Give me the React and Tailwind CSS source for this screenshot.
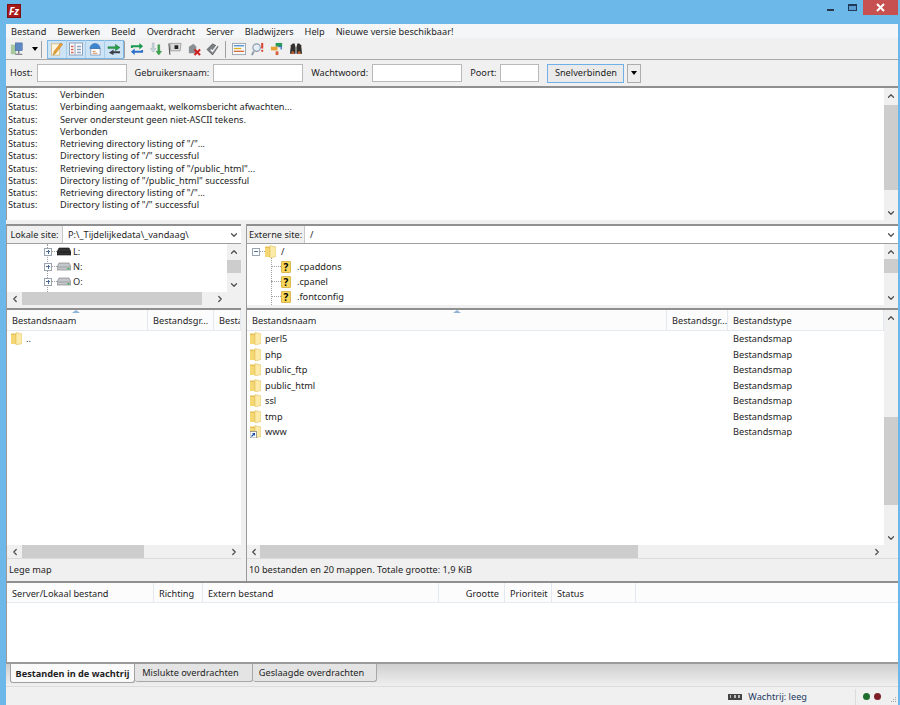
import { ChevronUp, ChevronDown, ChevronLeft, ChevronRight } from 'lucide-react';

const logLines = [
	'Verbinden',
	'Verbinding aangemaakt, welkomsbericht afwachten...',
	'Server ondersteunt geen niet-ASCII tekens.',
	'Verbonden',
	'Retrieving directory listing of "/"...',
	'Directory listing of "/" successful',
	'Retrieving directory listing of "/public_html"...',
	'Directory listing of "/public_html" successful',
	'Retrieving directory listing of "/"...',
	'Directory listing of "/" successful',
];

const remoteFolders = ['perl5', 'php', 'public_ftp', 'public_html', 'ssl', 'tmp', 'www'];

function Folder({ link }) {
	return (
		<svg width="11" height="13" viewBox="0 0 11 13" className="shrink-0">
			<path d="M0 1.500h5v10.500H0z" fill="#e6bf55" />
			<path d="M5 0.500l6 1.500v9.500l-6 1.500z" fill="#fbeaa8" stroke="#dcb850" strokeWidth="0.5" />
			<path d="M0 3h4.500v9H0z" fill="#f5d873" />
			{link && <rect x="0" y="6.500" width="6.500" height="6.500" fill="#fff" stroke="#777" strokeWidth="0.7" />}
			{link && <path d="M1.500 11.500l3-3M2.500 8.500h2v2" stroke="#1c4fa8" strokeWidth="1.100" fill="none" />}
		</svg>
	);
}

function Unknown() {
	return (
		<span className="w-[10px] h-[12px] shrink-0 bg-[#f7d65c] border border-[#dcb850] rounded-[1px] flex items-center justify-center text-[10px] font-bold text-black leading-none">
			?
		</span>
	);
}

function Drive({ dark }) {
	return (
		<svg width="14" height="9" viewBox="0 0 14 9" className="shrink-0">
			<path d="M2 1h10l2 4v3H0V5z" fill={dark ? '#333' : '#c4c8cc'} stroke={dark ? '#111' : '#777'} strokeWidth="0.6" />
			<path d="M0.500 5h13" stroke={dark ? '#111' : '#888'} strokeWidth="0.6" />
			{!dark && <rect x="10.500" y="6" width="2" height="1.400" fill="#35b050" />}
		</svg>
	);
}

function Expander({ minus }) {
	return (
		<span className="relative w-[8px] h-[8px] shrink-0 border border-[#9aa4b0] bg-white flex items-center justify-center">
			<span className="w-[4px] h-px bg-[#4a6a9a]"></span>
			{!minus && <span className="absolute w-px h-[4px] bg-[#4a6a9a]"></span>}
		</span>
	);
}

function VScroll({ before, thumb }) {
	return (
		<div className="w-[14px] shrink-0 bg-[#f0f0f0] flex flex-col text-[#505050]">
			<div className="h-[15px] shrink-0 flex items-center justify-center">
				<ChevronUp size={10} strokeWidth={3} />
			</div>
			<div className="flex-1 min-h-0">
				<div style={{ height: before }}></div>
				<div className="bg-[#cdcdcd]" style={{ height: thumb }}></div>
			</div>
			<div className="h-[15px] shrink-0 flex items-center justify-center">
				<ChevronDown size={10} strokeWidth={3} />
			</div>
		</div>
	);
}

function HScroll({ thumb, after, lead }) {
	return (
		<div className="h-[13px] shrink-0 bg-[#f0f0f0] flex text-[#505050]" style={{ paddingRight: after }}>
			<div className="shrink-0 flex items-center justify-center" style={{ width: lead }}>
				<ChevronLeft size={10} strokeWidth={3} />
			</div>
			<div className="flex-1 min-w-0">
				<div className="h-full bg-[#cdcdcd]" style={{ width: thumb }}></div>
			</div>
			<div className="w-[15px] shrink-0 flex items-center justify-center">
				<ChevronRight size={10} strokeWidth={3} />
			</div>
		</div>
	);
}

function HeaderCell({ width, right, flush, children }) {
	return (
		<div
			className={`shrink-0 h-full pt-[2px] border-r border-[#e4e8ef] pl-[5px] flex items-center overflow-hidden whitespace-nowrap ${flush ? '' : 'pr-[5px]'} ${right ? 'justify-end' : ''}`}
			style={{ width }}
		>
			{children}
		</div>
	);
}

function SortArrow({ left }) {
	return <span className="absolute top-0 w-0 h-0 border-x-[4px] border-x-transparent border-b-[3px] border-b-[#8fb4d8]" style={{ left }}></span>;
}

function Field({ width }) {
	return <div className="h-[18px] bg-white border border-[#b9b9b9]" style={{ width }}></div>;
}

function ToolIcon({ narrow, children }) {
	return <div className={`${narrow ? 'w-[18px]' : 'w-[19px]'} h-[18px] shrink-0 flex items-center justify-center [&>svg]:w-[14px] [&>svg]:h-[14px]`}>{children}</div>;
}

function Sep() {
	return <div className="w-px h-[17px] bg-[#a0a0a0] shrink-0"></div>;
}

function Toolbar() {
	return (
		<div className="h-[20px] pt-[1px] flex items-center shrink-0 border-b border-[#a9a9a9] box-content">
			<div className="w-[1px]"></div>
			{/* site manager */}
			<ToolIcon>
				<svg width="16" height="16" viewBox="0 0 16 16">
					<rect x="1" y="3" width="6" height="11" fill="#a8c8a0" />
					<rect x="6" y="1" width="8" height="9" fill="#5c88c4" stroke="#3a5a90" strokeWidth="0.5" />
					<path d="M10 10v3M6 14h8" stroke="#667" strokeWidth="1.400" />
				</svg>
			</ToolIcon>
			<div className="w-[6px]"></div>
			<span className="w-0 h-0 border-x-[3.5px] border-x-transparent border-t-[4px] border-t-black"></span>
			<div className="w-[3px]"></div>
			<Sep />
			<div className="w-[5px]"></div>
			<div className="flex bg-[#cde4f7] border border-[#7db5e3] h-[19px] items-center">
				<div className="border-r border-[#a8cdea]">
					<ToolIcon narrow>
						<svg width="14" height="15" viewBox="0 0 14 15">
							<rect x="1" y="2" width="9" height="12" fill="#fdf7df" stroke="#d2a860" strokeWidth="0.7" />
							<path d="M3 14l1-4 7-9 2 1.500-7 9z" fill="#f0a030" stroke="#9a6a20" strokeWidth="0.5" />
						</svg>
					</ToolIcon>
				</div>
				<div className="border-r border-[#a8cdea]">
					<ToolIcon narrow>
						<svg width="14" height="13" viewBox="0 0 14 13">
							<rect x="0.500" y="0.500" width="13" height="12" fill="#fff" stroke="#8aa0bc" />
							<path d="M6 1v11" stroke="#8aa0bc" />
							<path d="M2 4h2.500M2 7h2.500M2 10h2.500" stroke="#d86050" strokeWidth="1.300" />
							<path d="M8 4h4M8 7h4M8 10h4" stroke="#8aa0bc" strokeWidth="1.300" />
						</svg>
					</ToolIcon>
				</div>
				<div className="border-r border-[#a8cdea]">
					<ToolIcon narrow>
						<svg width="15" height="15" viewBox="0 0 15 15">
							<rect x="3" y="7" width="10" height="7" fill="#fff" stroke="#8aa0bc" />
							<path d="M2 7a5.500 5.500 0 0 1 11 0z" fill="#3c86d0" stroke="#2a5a9a" strokeWidth="0.5" />
							<path d="M5 10h3M5 12h5" stroke="#d08040" />
						</svg>
					</ToolIcon>
				</div>
				<ToolIcon narrow>
					<svg width="15" height="13" viewBox="0 0 15 13">
						<path d="M1 4h8V1.500L14 5l-5 3.500V6H1z" fill="#28a048" stroke="#186830" strokeWidth="0.4" />
						<path d="M14 9H7V7l-5 3.500L7 13v-2h7z" fill="#3a3f48" />
					</svg>
				</ToolIcon>
			</div>
			<Sep />
			<div className="w-[2px]"></div>
			<ToolIcon>
				<svg width="15" height="14" viewBox="0 0 15 14">
					<path d="M1 6V3h9V0.500L14 4l-4 3.500V5H3v1z" fill="#1a9a50" />
					<path d="M14 8v3H5v2.500L1 10l4-3.500V9h7V8z" fill="#2a70c8" />
				</svg>
			</ToolIcon>
			<ToolIcon>
				<svg width="14" height="15" viewBox="0 0 14 15">
					<path d="M3 1h2v6h2l-3 4-3-4h2z" fill="#c8d4dc" stroke="#90a0b0" strokeWidth="0.4" />
					<path d="M9 3h2v7h2l-3 4-3-4h2z" fill="#38a848" stroke="#207030" strokeWidth="0.4" />
				</svg>
			</ToolIcon>
			<ToolIcon>
				<svg width="15" height="14" viewBox="0 0 15 14">
					<path d="M1 1l1 12" stroke="#555" strokeWidth="1.200" />
					<path d="M2 1h12l-1 8H3z" fill="#dadada" stroke="#777" strokeWidth="0.6" />
					<rect x="7" y="3" width="4" height="4" fill="#222" />
				</svg>
			</ToolIcon>
			<ToolIcon>
				<svg width="15" height="15" viewBox="0 0 15 15">
					<path d="M2 5l5-3 3 3v7H2z" fill="#8a8f94" />
					<path d="M8 8l6 6M14 8l-6 6" stroke="#d02020" strokeWidth="2.200" />
				</svg>
			</ToolIcon>
			<ToolIcon>
				<svg width="15" height="15" viewBox="0 0 15 15">
					<path d="M1 8l6-6 6 3-6 9z" fill="#7a7f84" stroke="#444" strokeWidth="0.6" />
					<path d="M5 8l2 2 6-8" stroke="#f4f4f4" strokeWidth="1.600" fill="none" />
				</svg>
			</ToolIcon>
			<div className="w-[3px]"></div>
			<Sep />
			<div className="w-[3px]"></div>
			<ToolIcon>
				<svg width="15" height="13" viewBox="0 0 15 13">
					<rect x="0.500" y="0.500" width="14" height="12" fill="#f8f8f8" stroke="#9aa4b0" />
					<path d="M2 3h11" stroke="#4a90d0" strokeWidth="1.400" />
					<path d="M2 6h8" stroke="#e0b020" strokeWidth="1.400" />
					<path d="M2 9h11" stroke="#d07040" strokeWidth="1.400" />
				</svg>
			</ToolIcon>
			<ToolIcon>
				<svg width="15" height="15" viewBox="0 0 15 15">
					<circle cx="6" cy="6" r="4" fill="#e6eef6" stroke="#8a98a8" strokeWidth="1.200" />
					<path d="M3 10l-2 4" stroke="#8a98a8" strokeWidth="2" />
					<path d="M12 1v6" stroke="#d84030" strokeWidth="2.200" />
					<circle cx="12" cy="9.500" r="1.200" fill="#d84030" />
				</svg>
			</ToolIcon>
			<ToolIcon>
				<svg width="15" height="15" viewBox="0 0 15 15">
					<path d="M6 1h7v4H6z" fill="#2a9a58" />
					<path d="M1 5h7v4H1z" fill="#e8a030" />
					<path d="M6 10h3v4H6z" fill="#d86040" />
					<path d="M9 5h3v3" stroke="#3a70c0" strokeWidth="1.400" fill="none" />
				</svg>
			</ToolIcon>
			<ToolIcon>
				<svg width="15" height="14" viewBox="0 0 15 14">
					<path d="M2 3l2-2h2l1 4v7H1z" fill="#33302e" />
					<path d="M13 3l-2-2H9L8 5v7h6z" fill="#33302e" />
					<circle cx="4" cy="11" r="1.500" fill="#c86030" />
					<circle cx="11" cy="11" r="1.500" fill="#c86030" />
				</svg>
			</ToolIcon>
		</div>
	);
}

function QuickConnect() {
	return (
		<div className="h-[26px] shrink-0 flex items-center pl-[4px] border-b-2 border-[#8f8f8f] box-content">
			<span>Host:</span>
			<div className="ml-[4px]"><Field width="90px" /></div>
			<span className="ml-[8px]">Gebruikersnaam:</span>
			<div className="ml-[4px]"><Field width="90px" /></div>
			<span className="ml-[8px]">Wachtwoord:</span>
			<div className="ml-[4px]"><Field width="90px" /></div>
			<span className="ml-[8px]">Poort:</span>
			<div className="ml-[4px]"><Field width="39px" /></div>
			<div className="ml-[8px] w-[77px] h-[19px] border border-[#6fb0e8] bg-[#eaeaea] flex items-center justify-center whitespace-nowrap">Snelverbinden</div>
			<div className="ml-[3px] w-[14px] h-[19px] border border-[#adadad] bg-[#eeeeee] flex items-center justify-center">
				<span className="w-0 h-0 border-x-[3.5px] border-x-transparent border-t-[4px] border-t-black"></span>
			</div>
		</div>
	);
}

function SiteBar({ label, path, labelWidth }) {
	return (
		<div className="h-[17px] shrink-0 flex items-stretch border-t-2 border-[#8f8f8f] box-content border-b border-b-[#a0a0a0] bg-white">
			<div className="shrink-0 bg-[#f0f0f0] border-r border-[#c8c8c8] flex items-center justify-center whitespace-nowrap" style={{ width: labelWidth }}>{label}</div>
			<div className="flex-1 min-w-0 flex items-center pl-[5px] overflow-hidden whitespace-nowrap">{path}</div>
			<div className="w-[14px] shrink-0 flex items-center justify-center text-[#505050]">
				<ChevronDown size={10} strokeWidth={3} />
			</div>
		</div>
	);
}

function LocalTree() {
	const drives = [['L:', true], ['N:', false], ['O:', false]];
	return (
		<div className="h-[61px] shrink-0 flex flex-col">
			<div className="flex-1 min-h-0 flex">
				<div className="relative flex-1 bg-white flex flex-col pl-[37px] overflow-hidden">
					<span className="absolute left-[40px] top-0 bottom-0 border-l border-dotted border-[#a0a0a0]"></span>
					{drives.map(([name, dark]) => (
						<div key={name} className="relative h-[15px] shrink-0 flex items-center">
							<Expander />
							<span className="w-[5px] border-t border-dotted border-[#a0a0a0]"></span>
							<Drive dark={dark} />
							<span className="ml-[2px]">{name}</span>
						</div>
					))}
				</div>
				<VScroll before="1px" thumb="13px" />
			</div>
			<HScroll thumb="180px" after="14px" lead="15px" />
		</div>
	);
}

function RemoteTree() {
	return (
		<div className="h-[61px] shrink-0 flex">
			<div className="relative flex-1 bg-white flex flex-col pl-[5px] overflow-hidden">
				<span className="absolute left-[24px] top-[12px] bottom-0 border-l border-dotted border-[#a0a0a0]"></span>
				<div className="relative h-[15px] shrink-0 flex items-center">
					<Expander minus />
					<span className="w-[5px] border-t border-dotted border-[#a0a0a0]"></span>
					<Folder />
					<span className="ml-[5px]">/</span>
				</div>
				{['.cpaddons', '.cpanel', '.fontconfig'].map((name) => (
					<div key={name} className="relative h-[15px] shrink-0 flex items-center pl-[19px]">
						<span className="w-[10px] border-t border-dotted border-[#a0a0a0]"></span>
						<Unknown />
						<span className="ml-[6px]">{name}</span>
					</div>
				))}
			</div>
			<VScroll before="0px" thumb="14px" />
		</div>
	);
}

function StatusLine({ children }) {
	return <div className="h-[23px] shrink-0 flex items-center pl-[2px] border-t border-[#dcdcdc] whitespace-nowrap">{children}</div>;
}

function LocalList() {
	return (
		<div className="flex-1 min-h-0 mt-[3px] flex flex-col border-t-2 border-[#8f8f8f]">
			<div className="relative h-[21px] shrink-0 flex bg-[#fcfcfd] border-b border-[#e4e8ef]">
				<SortArrow left="65px" />
				<HeaderCell width="141px">Bestandsnaam</HeaderCell>
				<HeaderCell width="66px">Bestandsgr...</HeaderCell>
				<HeaderCell width="27px" flush>Besta</HeaderCell>
			</div>
			<div className="flex-1 min-h-0 bg-white pl-[4px]">
				<div className="h-[15px] flex items-center gap-[4px]">
					<Folder />
					<span>..</span>
				</div>
			</div>
			<HScroll thumb="122px" after="0px" lead="15px" />
			<StatusLine>Lege map</StatusLine>
		</div>
	);
}

function RemoteList() {
	return (
		<div className="flex-1 min-h-0 mt-[3px] flex flex-col border-t-2 border-[#8f8f8f]">
			<div className="flex-1 min-h-0 flex">
				<div className="flex-1 min-w-0 flex flex-col">
					<div className="relative h-[21px] shrink-0 flex bg-[#fcfcfd] border-b border-[#e4e8ef]">
						<SortArrow left="206px" />
						<HeaderCell width="420px">Bestandsnaam</HeaderCell>
						<HeaderCell width="61px">Bestandsgr...</HeaderCell>
						<HeaderCell width="156px">Bestandstype</HeaderCell>
					</div>
					<div className="flex-1 min-h-0 bg-white">
						{remoteFolders.map((name) => (
							<div key={name} className="h-[15.5px] flex items-center">
								<div className="w-[420px] pl-[3px] flex items-center gap-[4px]">
									<Folder link={name === 'www'} />
									<span>{name}</span>
								</div>
								<div className="w-[61px]"></div>
								<div className="pl-[5px]">Bestandsmap</div>
							</div>
						))}
					</div>
				</div>
				<VScroll before="92px" thumb="88px" />
			</div>
			<HScroll thumb="378px" after="14px" lead="13px" />
			<StatusLine>10 bestanden en 20 mappen. Totale grootte: 1,9 KiB</StatusLine>
		</div>
	);
}

function Queue() {
	return (
		<div className="h-[79px] shrink-0 flex flex-col bg-white border-l border-[#9a9a9a] border-t-2 border-t-[#8f8f8f] border-b-2 border-b-[#9a9a9a] box-content">
			<div className="h-[20px] shrink-0 flex bg-[#fcfcfd] border-b border-[#e4e8ef]">
				<HeaderCell width="147px">Server/Lokaal bestand</HeaderCell>
				<HeaderCell width="49px">Richting</HeaderCell>
				<HeaderCell width="236px">Extern bestand</HeaderCell>
				<HeaderCell width="66px" right>Grootte</HeaderCell>
				<HeaderCell width="47px">Prioriteit</HeaderCell>
				<HeaderCell width="84px">Status</HeaderCell>
			</div>
		</div>
	);
}

function Tabs() {
	return (
		<div className="h-[23px] shrink-0 flex items-start pl-[4px] whitespace-nowrap bg-gradient-to-b from-[#cfcfcf] to-[#f0f0f0] border-b border-[#dcdcdc]">
			<div className="w-[125px] h-[19px] pt-[1px] bg-[#fafafa] border-x border-b border-[#a0a0a0] rounded-b-[3px] flex items-center justify-center font-bold">Bestanden in de wachtrij</div>
			<div className="w-[118px] h-[18px] pt-[1px] pr-[6px] bg-[#e4e4e4] border-r border-b border-[#a8a8a8] rounded-b-[3px] flex items-center justify-center">Mislukte overdrachten</div>
			<div className="w-[124px] h-[18px] pt-[1px] pr-[6px] bg-[#e4e4e4] border-r border-b border-[#a8a8a8] rounded-b-[3px] flex items-center justify-center">Geslaagde overdrachten</div>
		</div>
	);
}

function StatusBar() {
	return (
		<div className="flex-1 h-full min-h-0 pt-[1px] flex items-center justify-end">
			<span className="w-[14px] h-[6px] bg-[#444] mr-[6px] flex items-center justify-around px-[1px]">
				<span className="w-[1px] h-[3px] bg-[#bbb]"></span>
				<span className="w-[2px] h-[3px] bg-[#bbb]"></span>
				<span className="w-[2px] h-[3px] bg-[#bbb]"></span>
			</span>
			<span className="text-[#243a60] whitespace-nowrap">Wachtrij: leeg</span>
			<div className="w-px h-[16px] bg-[#dcdcdc] ml-[48px]"></div>
			<span className="w-[7px] h-[7px] rounded-full bg-[#1f6e2c] ml-[7px]"></span>
			<span className="w-[7px] h-[7px] rounded-full bg-[#7e1f28] ml-[4px]"></span>
			<div className="w-[10px]"></div>
			<svg width="6" height="6" viewBox="0 0 6 6" className="self-end mb-[3px] mr-[1px]">
				<path d="M4 1h1v1H4zM2 3h1v1H2zM4 3h1v1H4zM0 5h1v1H0zM2 5h1v1H2zM4 5h1v1H4z" fill="#a8a8a8" />
			</svg>
		</div>
	);
}

function TitleBar() {
	return (
		<div className="h-[24px] shrink-0 flex items-start">
			<div className="ml-[7px] mt-[4px] w-[14px] h-[14px] bg-[#a81a1a] border border-[#7c1010] flex items-center justify-center text-white italic font-bold text-[10px] leading-none">Fz</div>
			<div className="flex-1"></div>
			<div className="w-[7px] h-[2px] bg-[#28384c] mt-[9px] mr-[14px]"></div>
			<div className="w-[9px] h-[7px] border border-[#1e3a58] border-t-2 bg-[#5c9cd0] mt-[4px] mr-[6px]"></div>
			<div className="w-[35px] h-[15px] bg-[#c75050] mr-[2px] flex items-center justify-center text-white">
				<svg width="9" height="9" viewBox="0 0 9 9">
					<path d="M1 1l7 7M8 1l-7 7" stroke="#fff" strokeWidth="2" />
				</svg>
			</div>
		</div>
	);
}

export default function App() {
	return (
		<div className="w-[900px] h-[705px] bg-[#6cb8e8] flex flex-col overflow-hidden text-[9.2px] leading-none text-[#1e1e1e] font-['Noto_Sans',sans-serif]">
			<TitleBar />
			<div className="flex-1 min-h-0 ml-[6px] mr-[2px] bg-[#f0f0f0] flex flex-col">
				<div className="h-[14px] pt-[1px] shrink-0 flex items-center bg-[#f5f6f7] pl-[5px] gap-[11px] whitespace-nowrap">
					{['Bestand', 'Bewerken', 'Beeld', 'Overdracht', 'Server', 'Bladwijzers', 'Help', 'Nieuwe versie beschikbaar!'].map((item) => (
						<span key={item}>{item}</span>
					))}
				</div>
				<Toolbar />
				<QuickConnect />
				<div className="h-[132px] shrink-0 flex bg-white border-l border-[#9a9a9a]">
					<div className="flex-1 pl-[1px] pt-[0.5px]">
						{logLines.map((line, i) => (
							<div key={i} className="h-[12.25px] flex items-center whitespace-nowrap">
								<span className="w-[52px] shrink-0">Status:</span>
								<span>{line}</span>
							</div>
						))}
					</div>
					<VScroll before="2px" thumb="85px" />
				</div>
				<div className="h-[4px] shrink-0"></div>
				<div className="flex-1 min-h-0 flex flex-col">
					<div className="flex-1 min-h-0 flex gap-[5px]">
						<div className="w-[235px] shrink-0 flex flex-col border-l border-[#9a9a9a]">
							<SiteBar label="Lokale site:" path="P:\_Tijdelijkedata\_vandaag\" labelWidth="56px" />
							<LocalTree />
							<LocalList />
						</div>
						<div className="flex-1 min-w-0 flex flex-col border-l border-[#9a9a9a]">
							<SiteBar label="Externe site:" path="/" labelWidth="58px" />
							<RemoteTree />
							<RemoteList />
						</div>
					</div>
					<Queue />
					<Tabs />
					<div className="h-[18px] shrink-0"><StatusBar /></div>
				</div>
			</div>
		</div>
	);
}
